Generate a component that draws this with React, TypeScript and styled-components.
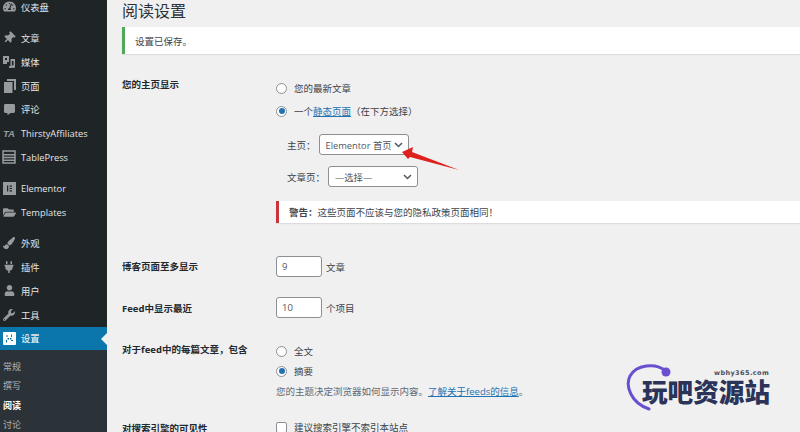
import React from 'react';
import styled, { createGlobalStyle } from 'styled-components';
import {
  FaThumbtack,
  FaCommentAlt,
  FaPaintBrush,
  FaPlug,
  FaUser,
  FaWrench,
  FaFolderOpen,
  FaTachometerAlt,
} from 'react-icons/fa';

const GlobalStyle = createGlobalStyle`
  html, body {
    margin: 0;
    padding: 0;
    height: 432px;
    overflow: hidden;
    background: #f0f0f1;
  }
  * { box-sizing: border-box; }
`;

const FONT = `"Open Sans", "Noto Sans CJK SC", sans-serif`;

const Page = styled.div`
  display: flex;
  position: relative;
  width: 800px;
  height: 432px;
  overflow: hidden;
  font-family: ${FONT};
  font-size: 9.5px;
  color: #3c434a;
`;

const Sidebar = styled.nav`
  flex: 0 0 107px;
  background: #1f2427;
  display: flex;
  flex-direction: column;
`;

const MenuGroup = styled.div<{ $top?: number }>`
  display: flex;
  flex-direction: column;
  flex: none;
  margin-top: ${(p) => p.$top ?? 0}px;
  margin-bottom: 7.4px;
`;

const MenuItem = styled.div<{ $active?: boolean }>`
  position: relative;
  display: flex;
  align-items: center;
  height: 23.8px;
  flex: none;
  gap: 5px;
  padding-left: 2px;
  color: ${(p) => (p.$active ? '#fff' : '#e4e6e8')};
  background: ${(p) => (p.$active ? '#0a76ac' : 'transparent')};
  font-size: 9.3px;
  &::after {
    content: '';
    display: ${(p) => (p.$active ? 'block' : 'none')};
    position: absolute;
    right: 0;
    top: 6px;
    border: 6px solid transparent;
    border-right-color: #f0f0f1;
    border-left: 0;
  }
`;

const IconSlot = styled.span<{ $active?: boolean; $tilt?: boolean }>`
  flex: 0 0 14px;
  height: 14px;
  display: flex;
  align-items: center;
  justify-content: center;
  color: ${(p) => (p.$active ? '#fff' : '#979a9e')};
  transform: ${(p) => (p.$tilt ? 'rotate(45deg)' : 'none')};
  svg { display: block; }
`;

const TaMark = styled.span`
  font: italic bold 9.5px "Liberation Sans", sans-serif;
  color: #979a9e;
`;

const SubMenu = styled.div`
  flex: 1;
  background: #2c3338;
  padding-top: 6px;
  display: flex;
  flex-direction: column;
`;

const SubItem = styled.div<{ $current?: boolean }>`
  height: 19.6px;
  flex: none;
  display: flex;
  align-items: center;
  padding-left: 3px;
  font-size: 9px;
  font-weight: ${(p) => (p.$current ? 700 : 400)};
  color: ${(p) => (p.$current ? '#fff' : '#aeb2b6')};
`;

const Main = styled.main`
  flex: 1;
  min-width: 0;
  padding-left: 15px;
  display: flex;
  flex-direction: column;
`;

const Title = styled.h1`
  margin: 0;
  flex: none;
  height: 27px;
  line-height: 22px;
  font-size: 16px;
  font-weight: 400;
  color: #2c3338;
`;

const Notice = styled.div<{ $color: string }>`
  display: flex;
  align-items: center;
  flex: none;
  background: #fff;
  border-left: 3px solid ${(p) => p.$color};
  box-shadow: 0 1px 1px rgba(0, 0, 0, 0.08);
  color: #3c434a;
  font-size: 9.5px;
`;

const SavedNotice = styled(Notice)`
  height: 27px;
  padding-left: 10px;
`;

const WarnNotice = styled(Notice)`
  height: 22px;
  margin-top: 14px;
  padding-left: 10px;
`;

const Form = styled.div`
  display: flex;
  flex-direction: column;
  flex: none;
  margin-top: 24px;
`;

const Row = styled.div<{ $mt?: number }>`
  display: grid;
  grid-template-columns: 154px 1fr;
  margin-top: ${(p) => p.$mt ?? 0}px;
`;

const Label = styled.div<{ $pt?: number }>`
  font-weight: 700;
  font-size: 9.5px;
  line-height: 12px;
  color: #23282d;
  padding-top: ${(p) => p.$pt ?? 0}px;
`;

const Field = styled.div`
  display: flex;
  flex-direction: column;
`;

const Option = styled.div<{ $mt?: number }>`
  display: flex;
  align-items: center;
  gap: 7px;
  height: 20px;
  margin-top: ${(p) => p.$mt ?? 0}px;
`;

const Radio = styled.span<{ $on?: boolean }>`
  flex: none;
  width: 11px;
  height: 11px;
  border: 1px solid #8c8f94;
  border-radius: 50%;
  background: #fff;
  display: flex;
  align-items: center;
  justify-content: center;
  &::before {
    content: '';
    display: ${(p) => (p.$on ? 'block' : 'none')};
    width: 6px;
    height: 6px;
    border-radius: 50%;
    background: #2271b1;
  }
`;

const Check = styled.span`
  flex: none;
  width: 11px;
  height: 11px;
  border: 1px solid #8c8f94;
  border-radius: 2px;
  background: #fff;
`;

const Link = styled.a`
  color: #2271b1;
  text-decoration: underline;
`;

const PageRow = styled.div<{ $mt: number }>`
  display: flex;
  align-items: center;
  gap: 3px;
  margin-top: ${(p) => p.$mt}px;
  padding-left: 11px;
`;

const Select = styled.div`
  width: 90px;
  height: 21px;
  background: #fff;
  border: 1px solid #8c8f94;
  border-radius: 3px;
  display: flex;
  align-items: center;
  justify-content: space-between;
  padding: 0 5px 0 6px;
  color: #50575e;
  font-size: 9.3px;
  white-space: nowrap;
`;

const NumberLine = styled.div`
  display: flex;
  align-items: center;
  gap: 4px;
`;

const NumberBox = styled.div`
  width: 46px;
  height: 21px;
  background: #fff;
  border: 1px solid #8c8f94;
  border-radius: 3px;
  display: flex;
  align-items: center;
  padding-left: 5px;
  color: #50575e;
  font-size: 9.5px;
`;

const Desc = styled.div`
  height: 20px;
  display: flex;
  align-items: center;
  color: #646970;
  font-size: 9.5px;
`;

const ArrowMark = styled.svg`
  position: absolute;
  left: 400px;
  top: 146px;
`;

const Watermark = styled.div`
  position: absolute;
  left: 625px;
  top: 362px;
  width: 160px;
  height: 60px;
`;

const WatermarkArc = styled.svg`
  position: absolute;
  left: 0;
  top: 0;
`;

const WatermarkUrl = styled.div`
  position: absolute;
  left: 89px;
  top: 6px;
  font: 700 6.5px/10px "DejaVu Sans", sans-serif;
  letter-spacing: 0.4px;
  color: #4a4f63;
`;

const WatermarkName = styled.div`
  position: absolute;
  left: 17px;
  top: 17px;
  font: 900 25.6px/24px "Noto Sans CJK SC", sans-serif;
  white-space: nowrap;
  color: #2b3358;
`;

const Chevron = () => (
  <svg width="9" height="6" viewBox="0 0 9 6">
    <path d="M1 1l3.500 3.500L8 1" fill="none" stroke="#50575e" strokeWidth="1.500" />
  </svg>
);

const MediaIcon = () => (
  <svg width="14" height="13" viewBox="0 0 14 13" fill="currentColor">
    <path d="M1 1h6v6H5v2H1z M3 3v2h2V3z" fillRule="evenodd" />
    <path d="M8.500 4h4.500v7.500a1.600 1.600 0 1 1-1.500-1.600V6h-1.600v6.300a1.500 1.500 0 1 1-1.400-1.500z" />
  </svg>
);

const PagesIcon = () => (
  <svg width="13" height="14" viewBox="0 0 13 14" fill="currentColor">
    <path d="M4 0h9v11H11V2H4z" />
    <path d="M1 3h8.500v11H1z" />
  </svg>
);

const TableIcon = () => (
  <svg width="14" height="14" viewBox="0 0 14 14" fill="none" stroke="currentColor" strokeWidth="1.500">
    <path d="M1 1h12v12H1z M1 4.700h12 M1 7.500h12 M1 10.300h12" />
  </svg>
);

const ElementorIcon = () => (
  <svg width="13" height="13" viewBox="0 0 13 13">
    <rect width="13" height="13" fill="currentColor" />
    <path d="M4 3.500h1.200v6H4z M6.500 3.500H9v1.200H6.500z M6.500 5.900H9v1.200H6.500z M6.500 8.300H9v1.200H6.500z" fill="#1f2427" />
  </svg>
);

const SettingsIcon = () => (
  <svg width="13" height="13" viewBox="0 0 13 13">
    <rect width="13" height="13" rx="1" fill="currentColor" />
    <path d="M3 3.500h2v1H3z M3 8h1v2.500H3z M8 2.500h1V5H8z M8 8h2v1H8z M4.500 6h1.500v1.500H4.500z M7 6h1.500v1.500H7z" fill="#0a76ac" />
  </svg>
);

const App = () => {
  return (
    <Page>
      <GlobalStyle />
      <Sidebar>
        <MenuGroup $top={-5}>
          <MenuItem>
            <IconSlot><FaTachometerAlt size={13} /></IconSlot>仪表盘
          </MenuItem>
        </MenuGroup>
        <MenuGroup>
          <MenuItem><IconSlot $tilt><FaThumbtack size={12} /></IconSlot>文章</MenuItem>
          <MenuItem><IconSlot><MediaIcon /></IconSlot>媒体</MenuItem>
          <MenuItem><IconSlot><PagesIcon /></IconSlot>页面</MenuItem>
          <MenuItem><IconSlot><FaCommentAlt size={11} /></IconSlot>评论</MenuItem>
          <MenuItem><IconSlot><TaMark>TA</TaMark></IconSlot>ThirstyAffiliates</MenuItem>
          <MenuItem><IconSlot><TableIcon /></IconSlot>TablePress</MenuItem>
        </MenuGroup>
        <MenuGroup>
          <MenuItem><IconSlot><ElementorIcon /></IconSlot>Elementor</MenuItem>
          <MenuItem><IconSlot><FaFolderOpen size={13} /></IconSlot>Templates</MenuItem>
        </MenuGroup>
        <MenuItem><IconSlot><FaPaintBrush size={12} /></IconSlot>外观</MenuItem>
        <MenuItem><IconSlot><FaPlug size={12} /></IconSlot>插件</MenuItem>
        <MenuItem><IconSlot><FaUser size={11} /></IconSlot>用户</MenuItem>
        <MenuItem><IconSlot><FaWrench size={12} /></IconSlot>工具</MenuItem>
        <MenuItem $active><IconSlot $active><SettingsIcon /></IconSlot>设置</MenuItem>
        <SubMenu>
          <SubItem>常规</SubItem>
          <SubItem>撰写</SubItem>
          <SubItem $current>阅读</SubItem>
          <SubItem>讨论</SubItem>
        </SubMenu>
      </Sidebar>

      <Main>
        <Title>阅读设置</Title>
        <SavedNotice $color="#4fa958">设置已保存。</SavedNotice>
        <Form>
          <Row>
            <Label $pt={1}>您的主页显示</Label>
            <Field>
              <Option><Radio />您的最新文章</Option>
              <Option $mt={3}>
                <Radio $on />
                <span>一个<Link>静态页面</Link>（在下方选择）</span>
              </Option>
              <PageRow $mt={13}>主页：<Select>Elementor 首页<Chevron /></Select></PageRow>
              <PageRow $mt={11}>文章页：<Select>—选择—<Chevron /></Select></PageRow>
              <WarnNotice $color="#c9353c"><span><b>警告：</b>这些页面不应该与您的隐私政策页面相同！</span></WarnNotice>
            </Field>
          </Row>
          <Row $mt={33}>
            <Label $pt={5}>博客页面至多显示</Label>
            <NumberLine><NumberBox>9</NumberBox>文章</NumberLine>
          </Row>
          <Row $mt={20}>
            <Label $pt={6}>Feed中显示最近</Label>
            <NumberLine><NumberBox>10</NumberBox>个项目</NumberLine>
          </Row>
          <Row $mt={23}>
            <Label $pt={3}>对于feed中的每篇文章，包含</Label>
            <Field>
              <Option><Radio />全文</Option>
              <Option><Radio $on />摘要</Option>
              <Desc><span>您的主题决定浏览器如何显示内容。<Link>了解关于feeds的信息</Link>。</span></Desc>
            </Field>
          </Row>
          <Row $mt={16}>
            <Label $pt={6}>对搜索引擎的可见性</Label>
            <Option><Check />建议搜索引擎不索引本站点</Option>
          </Row>
        </Form>
      </Main>

      <ArrowMark width="62" height="28" viewBox="0 0 62 28">
        <path d="M2 6L13 1l-1 5 47 18L10 11 8 13z" fill="#e0201c" />
      </ArrowMark>

      <Watermark>
        <WatermarkArc width="60" height="60" viewBox="0 0 60 60">
          <path d="M24 47C6 41 0 24 5 14 11 3 30 0 41 9" fill="none" stroke="#6a4fd0" strokeWidth="3" strokeLinecap="round" />
          <circle cx="41" cy="10" r="4.500" fill="#6a4fd0" />
        </WatermarkArc>
        <WatermarkUrl>wbhy365.com</WatermarkUrl>
        <WatermarkName>玩吧资源站</WatermarkName>
      </Watermark>
    </Page>
  );
};

export default App;
